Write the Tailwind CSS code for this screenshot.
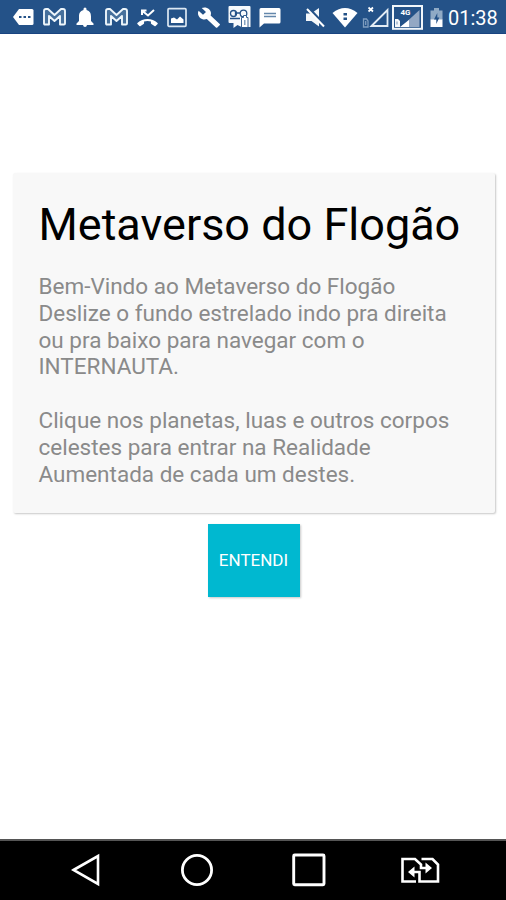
<!DOCTYPE html>
<html lang="pt-BR">
<head>
<meta charset="utf-8">
<title>Metaverso do Flogão</title>
<script src="https://cdn.jsdelivr.net/npm/@tailwindcss/browser@4"></script>
</head>
<body class="bg-white font-['Roboto',sans-serif]">
<div class="flex h-[900px] w-[506px] flex-col overflow-hidden bg-white">
  <header class="flex h-[34px] shrink-0 items-start border-b border-[#194480] bg-[#245288] pl-[13px] pt-[5px] text-white">
    <!-- more notifications -->
    <svg class="mr-[9px] h-6 w-[21px]" viewBox="0 0 21 24"><path d="M6 4h13q1.500 0 1.500 1.500v13q0 1.500-1.500 1.500H6L0 12z" fill="#fff"/><path d="M6 11h2.500v2H6zM10.500 11H13v2h-2.500zM15 11h2.500v2H15z" fill="#245288"/></svg>
    <!-- mail -->
    <svg class="mr-[10px] h-6 w-[23px]" viewBox="0 0 23 24"><path d="M1 18.500V6q0-2 2-2h2l6.500 6L18 4h2q2 0 2 2v12.500q0 1-1 1h-4V11l-5.500 5L6 11v8.500H2q-1 0-1-1z" fill="#46709c" stroke="#eef6fb" stroke-width="1.900" stroke-linejoin="round"/></svg>
    <!-- bell -->
    <svg class="mr-[11px] h-6 w-[18px]" viewBox="0 0 18 24" fill="#fff"><path d="M7.500 5V4a1.500 1.500 0 0 1 3 0v1C14 5.900 15 8.500 15 11.500v4.500l2.500 2.500v1.500H.5v-1.500L3 16v-4.500c0-3 1-5.600 4.500-6.500zM7 20h4q-.3 2-2 2t-2-2z"/></svg>
    <!-- mail -->
    <svg class="mr-[9px] h-6 w-[23px]" viewBox="0 0 23 24"><path d="M1 18.500V6q0-2 2-2h2l6.500 6L18 4h2q2 0 2 2v12.500q0 1-1 1h-4V11l-5.500 5L6 11v8.500H2q-1 0-1-1z" fill="#46709c" stroke="#eef6fb" stroke-width="1.900" stroke-linejoin="round"/></svg>
    <!-- missed call -->
    <svg class="mr-[9px] h-6 w-[21px]" viewBox="0 0 21 24"><path d="M5 10V5.500h4.500M5.500 6l5.500 4.500L17 5" fill="none" stroke="#fff" stroke-width="2"/><path d="M.4 18C6 12.500 15 12.500 20.600 18q.4.500 0 1l-2 2q-.6.500-1.200 0l-3-1.900q-.6-.4-.5-1l.1-1.600q-3.500-1-7 0l.1 1.600q.1.600-.5 1l-3 1.900q-.6.500-1.200 0l-2-2q-.4-.5 0-1z" fill="#fff"/></svg>
    <!-- picture -->
    <svg class="mr-[10px] h-6 w-[20px]" viewBox="0 0 20 24"><rect x="1" y="3.700" width="18" height="17.600" rx="1" fill="none" stroke="#dce8f3" stroke-width="1.700"/><path d="M4 18v-4.500l3-1 3 2 3-3 3.500 3V18z" fill="#fff"/></svg>
    <!-- wrench -->
    <svg class="mr-[6px] h-6 w-[24px]" viewBox="0 0 24 24" fill="#fff"><path transform="translate(0 1.500) scale(1 .92)" d="M22.700 19l-9.100-9.100c.9-2.300.4-5-1.500-6.900-2-2-5-2.400-7.400-1.300L9 6 6 9 1.600 4.700C.4 7.100.9 10.100 2.900 12.100c1.900 1.900 4.600 2.400 6.900 1.500l9.100 9.100c.4.400 1 .4 1.400 0l2.300-2.300c.5-.4.500-1.100.1-1.400z"/></svg>
    <!-- chat -->
    <svg class="mr-[8px] h-6 w-[24px]" viewBox="0 0 24 24"><path d="M1.500 1h21q1 0 1 1v20h-9l-4-2-4 3v-5h-4q-1 0-1-1V2q0-1 1-1z" fill="#f7fafc"/><g fill="none" stroke="#245288" stroke-width="1.300"><circle cx="6.500" cy="8.500" r="3"/><circle cx="16.500" cy="8.500" r="3.300"/><path d="M3 13.500h10M10 8h3M8.500 6.500v4"/></g><path d="M14.500 12.500h2v-2h3v2h1.500v10h-6.500z" fill="#fff" stroke="#245288" stroke-width=".9"/><path d="M17 15h1.500v5H17z" fill="#84a2c0"/></svg>
    <!-- message -->
    <svg class="mr-[24px] h-6 w-[22px]" viewBox="0 0 22 24"><path d="M2 3h18q1.500 0 1.500 1.500V17q0 1.500-1.500 1.500H5L.5 22.500v-18Q.5 3 2 3z" fill="#fff"/><path d="M5 8.500h12M5 11.500h12" stroke="#6487ab" stroke-width="1.400"/></svg>
    <!-- muted -->
    <svg class="mr-[6px] h-6 w-[21px]" viewBox="0 0 21 24"><path d="M1 8.500h5l8-5.500v18.500L6.500 16H1z" fill="#f3f7fa"/><path d="M3.500 3.500L20 21" stroke="#245288" stroke-width="3.600"/><path d="M2 4L19 21.500" stroke="#fff" stroke-width="2"/></svg>
    <!-- wifi -->
    <svg class="mr-[4px] h-6 w-[26px]" viewBox="0 0 26 24"><path d="M.5 8Q13-2 25.500 8L13 22.500z" fill="#fff"/><path d="M11.500 8h3.500v2.500h-3.500zM11.500 12.500h3.500V15h-3.500z" fill="#245288"/></svg>
    <!-- signal without service -->
    <svg class="mr-[3px] h-6 w-[27px]" viewBox="0 0 27 24" fill="none"><path d="M1.500 14h3l1.500 2v6H1.500zM3.700 16v4" stroke="#7f9dbf" stroke-width="1.300"/><path d="M6.500 2.500l4.500 4M11 2.500l-4.500 4" stroke="#fff" stroke-width="1.700"/><path d="M9.500 21L25.500 5v16z" stroke="#e4edf5" stroke-width="1.800"/></svg>
    <!-- 4G signal -->
    <svg class="mr-[7px] h-[25px] w-[31px]" viewBox="0 0 31 25"><rect x="1" y="1" width="29" height="22.800" fill="#245288" stroke="#f1f6fa" stroke-width="2"/><path d="M9 22L27.500 5v17z" fill="#93a8c4"/><path d="M8 22l9-7v7z" fill="#fff"/><path d="M3 14h3l2 2v6H3z" fill="#f5f8fa"/><path d="M5 16.500v3" stroke="#7894b5"/><text x="8.500" y="10" fill="#fff" font-size="8" font-weight="700" font-family="Roboto">4G</text></svg>
    <!-- battery -->
    <svg class="mr-[5px] h-6 w-[13px]" viewBox="0 0 13 24"><path d="M4 3h5v2.500h3.500V15H.5V5.500H4z" fill="#8faac5"/><path d="M.5 14.500h12V22H.5z" fill="#fff"/><path d="M7.300 8L4 14.500h2.300V19l3-6.500h-2z" fill="#245288"/></svg>
    <span class="mt-[1px] text-[20px] leading-6">01:38</span>
  </header>

  <main class="flex flex-1 flex-col items-center pt-[139px]">
    <section class="ml-[2px] h-[340px] w-[482px] rounded-[2px] bg-[#f8f8f8] pl-[25.500px] pt-[25px] shadow-[1px_1px_2px_rgba(0,0,0,0.22)]">
      <h1 class="whitespace-nowrap text-[45px] leading-[54px] text-black">Metaverso do Flogão</h1>
      <p class="mt-[21px] whitespace-nowrap text-[22.500px] leading-[26.800px] text-[#8a8a8a]">Bem-Vindo ao Metaverso do Flogão<br>Deslize o fundo estrelado indo pra direita<br>ou pra baixo para navegar com o<br>INTERNAUTA.<br><br>Clique nos planetas, luas e outros corpos<br>celestes para entrar na Realidade<br>Aumentada de cada um destes.</p>
    </section>
    <button class="ml-px mt-[11px] h-[73px] w-[92px] bg-[#00b8d0] text-[17px] text-white shadow-[1px_1px_2px_rgba(0,0,0,0.22)]">ENTENDI</button>
  </main>

  <nav class="flex h-[61px] shrink-0 items-start border-t-2 border-[#555] bg-black pl-[71px] pt-[12px]">
    <svg class="mr-[80px] h-9 w-[30px]" viewBox="0 0 30 36"><path d="M2.500 17L27 3v28z" fill="none" stroke="#fff" stroke-width="2.600"/></svg>
    <svg class="mr-[78px] h-9 w-[33px]" viewBox="0 0 33 36"><circle cx="16" cy="17" r="14.600" fill="none" stroke="#fff" stroke-width="2.800"/></svg>
    <svg class="mr-[74px] h-9 w-[34px]" viewBox="0 0 34 36"><rect x="1.700" y="2" width="30.300" height="29.800" rx="1" fill="none" stroke="#fff" stroke-width="2.900"/></svg>
    <svg class="h-9 w-[40px]" viewBox="0 0 40 36"><g fill="none" stroke="#fff" stroke-width="2.600"><path d="M16 28.500H2.500V6H15L21 11.500V15h6M21.500 6h11L38 11.500v17H19.500V19H13"/></g><path d="M25.500 9.500L32 15l-6.500 5.500zM14.500 13.500L8 19l6.500 5.500z" fill="#fff"/></svg>
  </nav>
</div>
</body>
</html>
